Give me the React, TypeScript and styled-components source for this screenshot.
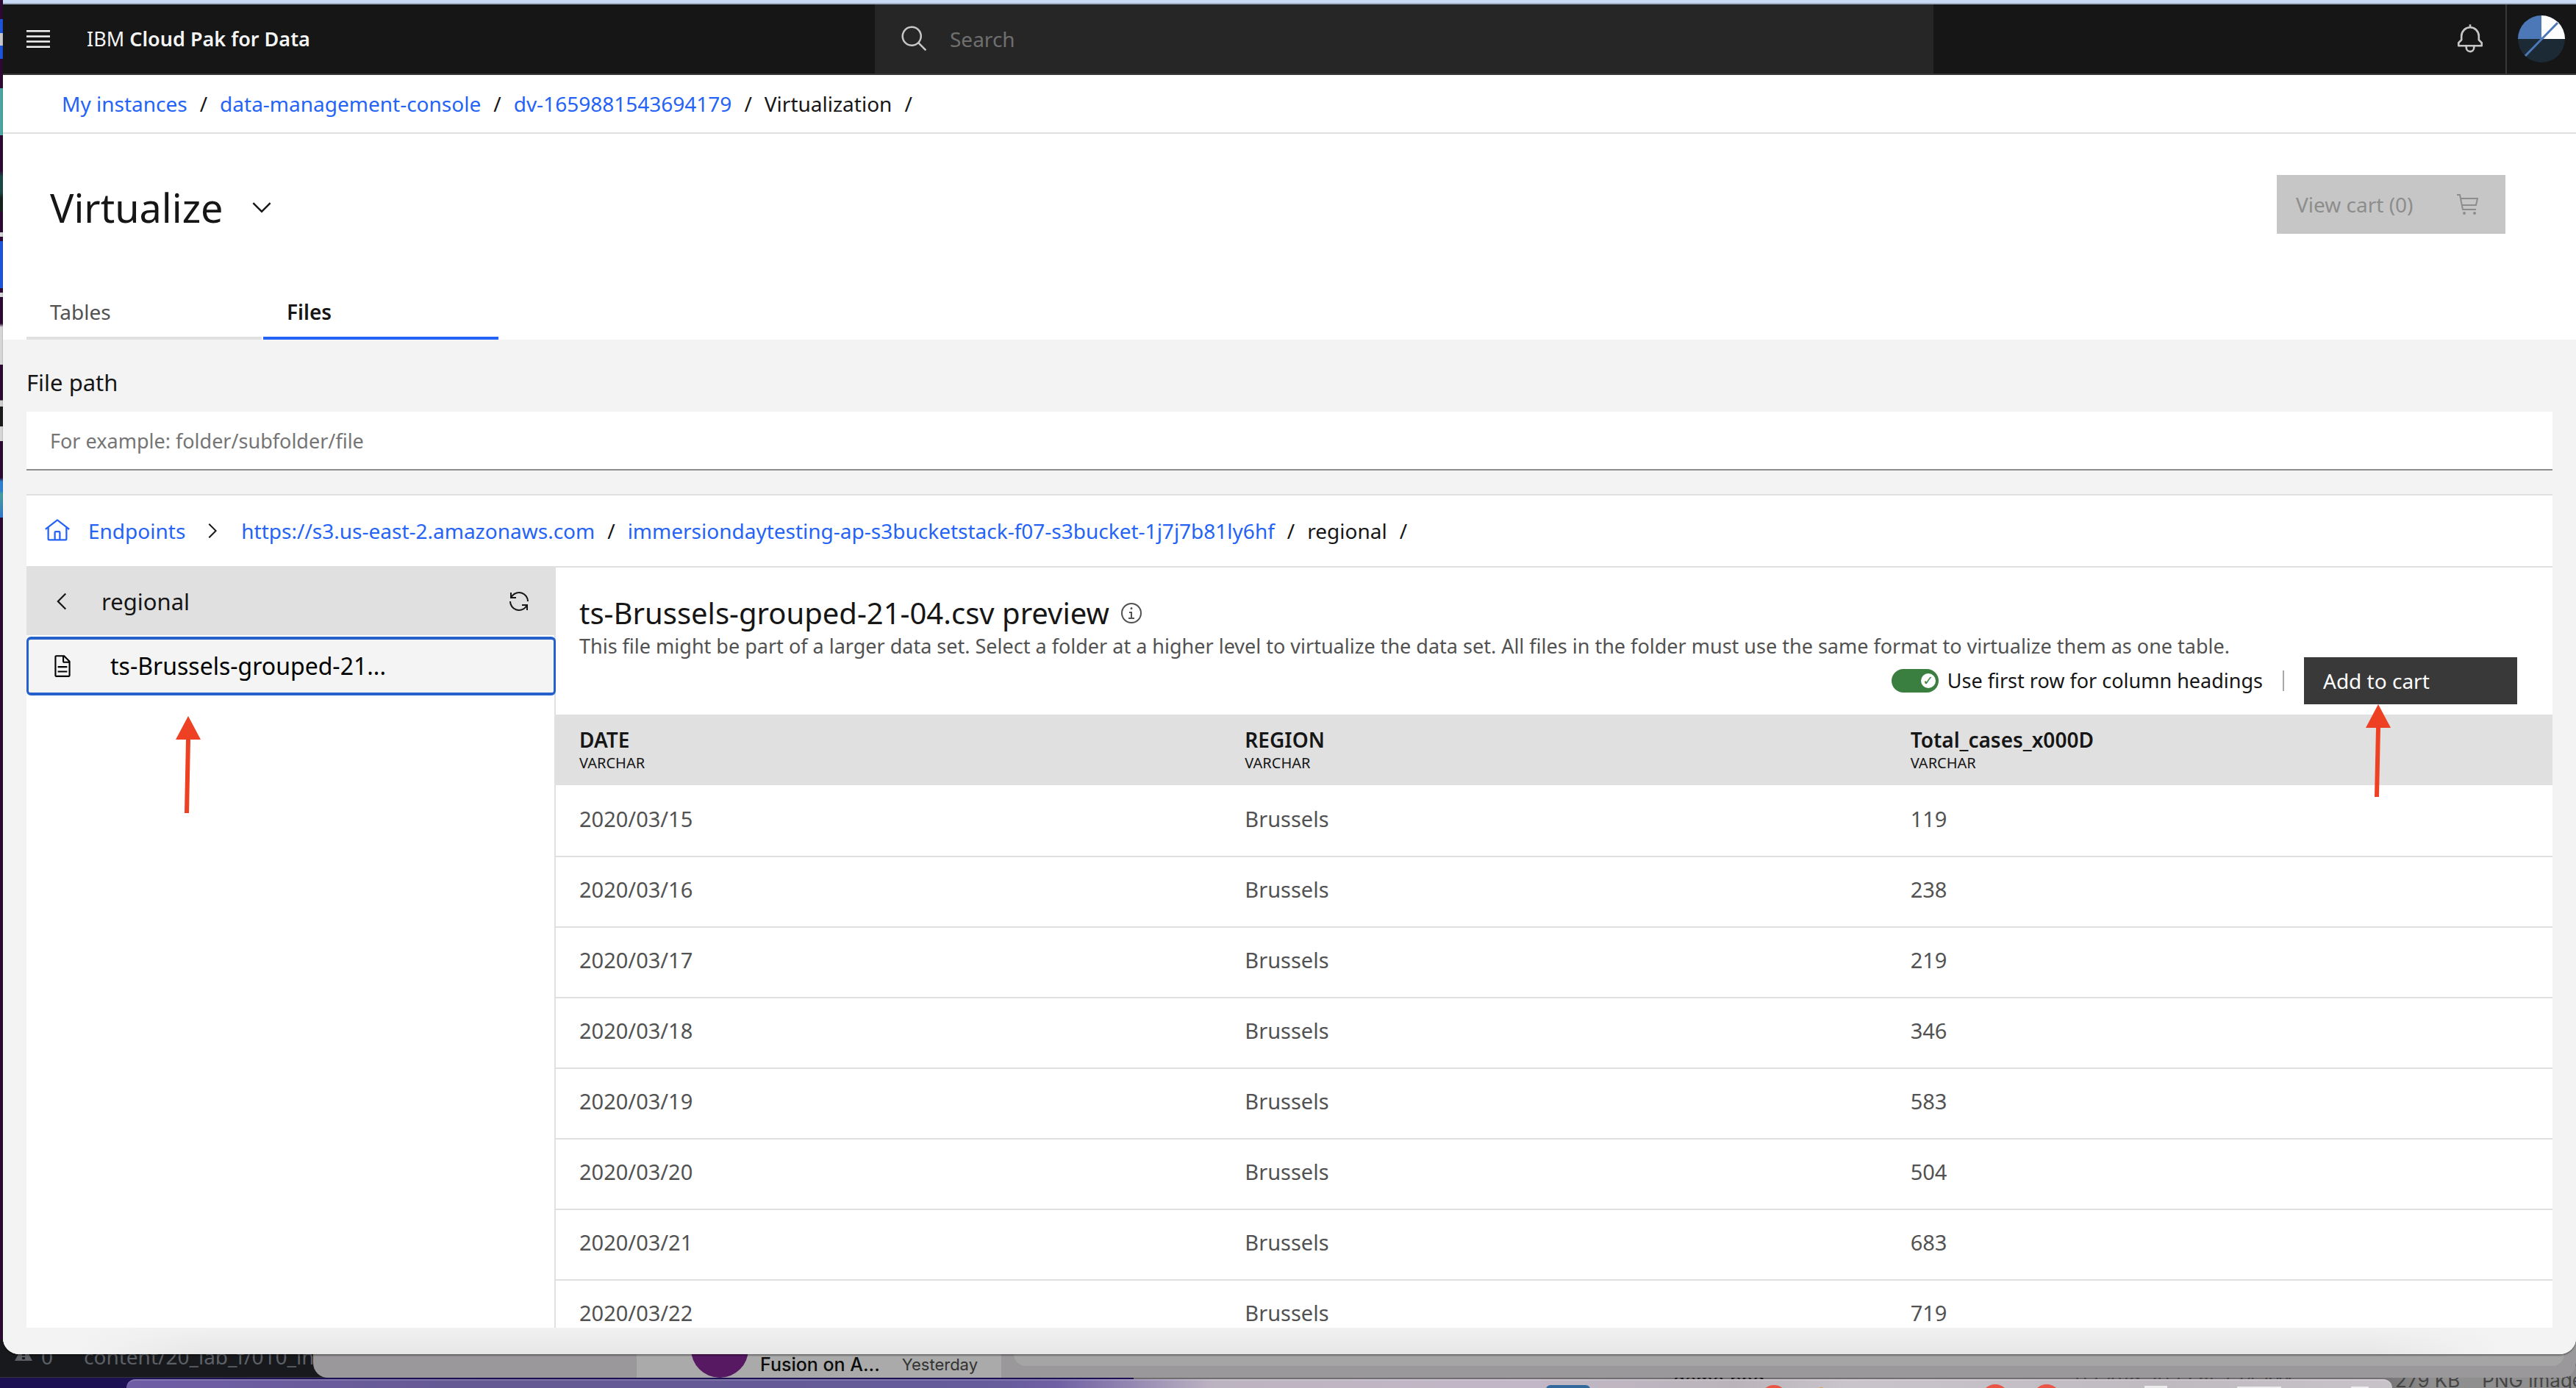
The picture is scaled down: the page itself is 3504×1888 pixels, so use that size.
import React, { useState } from "react";
import styled, { createGlobalStyle, css } from "styled-components";

const sans = `"Noto Sans", "Open Sans", sans-serif`;

const GlobalStyle = createGlobalStyle`
  *, *::before, *::after { box-sizing: border-box; }
  html, body { margin: 0; padding: 0; }
  body { font-family: ${sans}; font-size: 28px; line-height: 36px; color: #161616; background: #1b1153; }
  button, input { font: inherit; }
  a { color: #2563f7; text-decoration: none; }
`;

/* ---------- desktop behind the browser window ---------- */

const Desktop = styled.div`
  position: relative;
  height: 100vh;
  overflow: hidden;
  background: linear-gradient(#2d0a33 0 97%, #1b1153 99%);
`;

const DesktopIcons = styled.div`
  position: absolute;
  left: 0;
  top: 0;
  width: 4px;
  height: 720px;
  background: linear-gradient(
    #2d0a33 0 26px, #1d55d8 26px 45px, #c9c9cc 45px 62px, #1d55d8 62px 80px,
    #2d0a33 80px 120px, #4aa6a0 120px 184px, #2d0a33 184px 232px, #1c4744 240px 262px, #16211d 270px 288px,
    #2d0a33 288px 316px, #d6d6d8 316px 322px, #2d0a33 322px 328px, #1d55d8 328px 392px,
    #2d0a33 392px 398px, #d6d6d8 398px 404px, #2d0a33 404px 440px, #d6d6d8 445px 496px,
    #2d0a33 496px 544px, #cfcfcf 545px 553px, #1b1b1b 553px 580px, #d6d6d8 580px 600px,
    #2d0a33 600px 650px, #2d83cf 655px 668px, #49a09d 672px, #2f77cd 704px, #2d0a33 704px
  );
`;

const BackWindow = styled.div<{ $left: number; $bottom: number; $height: number; $color: string; $width?: string; $radius?: string }>`
  position: absolute;
  left: ${(p) => p.$left}px;
  bottom: ${(p) => p.$bottom}px;
  width: ${(p) => p.$width ?? "auto"};
  right: ${(p) => (p.$width ? "auto" : 0)};
  height: ${(p) => p.$height}px;
  background: ${(p) => p.$color};
  border-radius: ${(p) => p.$radius ?? "0"};
  overflow: hidden;
`;

const StatusBar = styled(BackWindow)`
  display: flex;
  align-items: flex-end;
  gap: 12px;
  padding: 0 20px 12px;
  font-size: 28px;
  line-height: 32px;
  color: #5c6066;
  white-space: nowrap;
  border-bottom: 1px solid #34343a;
  svg { flex: none; margin-bottom: 10px; }
`;

const StatusCount = styled.span`
  margin-right: 30px;
`;

const MailList = styled(BackWindow)`
  display: flex;
  align-items: flex-end;
  padding: 0 32px 0 74px;
`;

const Contact = styled.span`
  width: 78px;
  height: 78px;
  border-radius: 50%;
  background: #561962;
  color: #b0b0b0;
  text-align: center;
  line-height: 62px;
`;

const MailTitle = styled.span`
  margin-left: 16px;
  font: 25px/36px "Inter", sans-serif;
  font-weight: 500;
  color: #0c0c0c;
`;

const MailDate = styled.span`
  margin-left: auto;
  font: 22px/36px "Inter", sans-serif;
  color: #333333;
`;

const FinderRow = styled(BackWindow)`
  display: flex;
  align-items: flex-start;
  gap: 30px;
  padding: 4px 0 0 734px;
  font: 26px/32px "Inter", sans-serif;
  color: #454545;
  white-space: nowrap;
`;

const FinderName = styled.span`
  margin-right: auto;
  color: #151515;
`;

const FinderDate = styled.span`
  margin-right: 110px;
`;

const FinderKind = styled.span`
  margin-right: -10px;
`;

const Dock = styled.div`
  position: absolute;
  left: 172px;
  right: 250px;
  bottom: 0;
  height: 12px;
  overflow: hidden;
  border-top: 2px solid rgba(255, 255, 255, 0.16);
  border-radius: 20px 20px 0 0;
  background: linear-gradient(90deg, #6f5da6 0, #655a93 16%, #665b9b 38%, #6f60a3 41%, #bdb4c2 48%, #c1b7c6 62%, #bab4ba 71%, #c9c4cb 76%, #bfb9c0 90%, #c8c3c9 100%);
`;

const DockIcons = styled.svg`
  display: block;
  margin-left: auto;
`;

/* ---------- browser window ---------- */

const Window = styled.div`
  position: relative;
  display: flex;
  flex-direction: column;
  height: calc(100vh - 46px);
  margin-left: 4px;
  overflow: hidden;
  background: #f3f3f3;
  border-top: 4px solid #cadbf6;
  border-radius: 0 0 22px 22px;
  box-shadow: 0 2px 2px rgba(0, 0, 0, 0.35);
`;

const Header = styled.header`
  flex: none;
  display: grid;
  grid-template-columns: 1186px minmax(0, 1440px) 1fr;
  height: 98px;
  background: #161616;
  border-top: 2px solid #a3afc4;
  border-bottom: 2px solid #393939;
`;

const HeaderStart = styled.div`
  display: flex;
  align-items: center;
  gap: 50px;
  padding-left: 32px;
  color: #f4f4f4;
`;

const IconButton = styled.button`
  display: flex;
  align-items: center;
  justify-content: center;
  padding: 0;
  border: 0;
  background: none;
  color: inherit;
`;

const Product = styled.span`
  font-size: 27px;
  strong { font-weight: 600; }
`;

const SearchBox = styled.label`
  display: flex;
  align-items: center;
  gap: 28px;
  padding-left: 34px;
  background: #262626;
  color: #c6c6c6;
`;

const SearchInput = styled.input`
  flex: 1;
  padding: 0;
  border: 0;
  outline: 0;
  background: none;
  color: #f4f4f4;
  &::placeholder { color: #6f6f6f; opacity: 1; }
`;

const HeaderEnd = styled.div`
  display: flex;
  justify-content: flex-end;
  color: #c6c6c6;
`;

const HeaderAction = styled(IconButton)<{ $divided?: boolean }>`
  width: 96px;
  ${(p) => p.$divided && css`border-left: 2px solid #393939;`}
`;

const Crumbs = styled.nav<{ $inner?: boolean }>`
  flex: none;
  display: flex;
  align-items: center;
  gap: 17px;
  height: ${(p) => (p.$inner ? 100 : 80)}px;
  padding-left: ${(p) => (p.$inner ? 24 : 80)}px;
  background: #ffffff;
  border-bottom: 2px solid #e0e0e0;
  ${(p) => p.$inner && css`border-top: 2px solid #e0e0e0;`}
`;

const Home = styled.a`
  display: flex;
  align-items: center;
  gap: 24px;
`;

const CrumbChevron = styled.span`
  display: flex;
  padding: 0 6px 0 4px;
`;

const PageHead = styled.section`
  flex: none;
  display: flex;
  flex-direction: column;
  justify-content: space-between;
  height: 280px;
  background: #ffffff;
`;

const TitleRow = styled.div`
  display: flex;
  justify-content: space-between;
  align-items: flex-start;
  padding: 56px 96px 0 64px;
`;

const TitleGroup = styled.div`
  display: flex;
  align-items: center;
  gap: 32px;
  padding-top: 12px;
`;

const PageTitle = styled.h1`
  margin: 0;
  font-size: 54px;
  line-height: 64px;
  font-weight: 400;
`;

const CartButton = styled.button<{ $tone: "disabled" | "dark" }>`
  position: relative;
  display: flex;
  align-items: center;
  justify-content: space-between;
  border: 0;
  text-align: left;
  ${(p) => p.$tone === "disabled"
    ? css`width: 311px; height: 80px; padding: 0 34px 0 26px; background: #c6c6c6; color: #8d8d8d;`
    : css`width: 290px; height: 64px; padding: 0 26px; background: #393939; color: #ffffff;`}
`;

const Tabs = styled.div`
  display: flex;
  gap: 2px;
  padding-left: 32px;
`;

const Tab = styled.button<{ $active?: boolean }>`
  width: 320px;
  height: 80px;
  padding: 8px 32px 0;
  border: 0;
  border-bottom: 4px solid ${(p) => (p.$active ? "#2563f7" : "#e0e0e0")};
  background: none;
  color: ${(p) => (p.$active ? "#161616" : "#525252")};
  font-weight: ${(p) => (p.$active ? 600 : 400)};
  text-align: left;
`;

const Body = styled.main`
  flex: 1;
  min-height: 0;
  display: flex;
  flex-direction: column;
  padding: 0 32px;
`;

const FieldLabel = styled.label`
  padding: 38px 0 20px;
  font-size: 31px;
  line-height: 40px;
`;

const PathInput = styled.input`
  flex: none;
  width: 100%;
  height: 80px;
  margin-bottom: 32px;
  padding: 0 32px;
  border: 0;
  border-bottom: 2px solid #8d8d8d;
  border-radius: 0;
  background: #ffffff;
  font-size: 27px;
  &::placeholder { color: #757575; opacity: 1; }
`;

const Split = styled.div`
  flex: 1;
  min-height: 0;
  display: grid;
  grid-template-columns: 720px minmax(0, 1fr);
  background: #ffffff;
  overflow: hidden;
`;

const FolderPanel = styled.aside`
  border-right: 2px solid #e0e0e0;
`;

const FolderHead = styled.div`
  display: flex;
  align-items: center;
  height: 92px;
  margin-right: -2px;
  padding: 0 34px 0 30px;
  background: #e0e0e0;
  font-size: 31px;
`;

const FolderName = styled.span`
  flex: 1;
  margin-left: 36px;
`;

const FileItem = styled.button`
  position: relative;
  display: flex;
  align-items: center;
  gap: 48px;
  width: 720px;
  height: 80px;
  margin-top: 2px;
  padding: 0 29px;
  border: solid #2461cb;
  border-width: 4px 3px;
  border-radius: 6px;
  background: #f4f4f4;
  font-size: 32px;
  text-align: left;
`;

const ArrowMark = styled.svg<{ $left: number; $top: number }>`
  position: absolute;
  left: ${(p) => p.$left}px;
  top: ${(p) => p.$top}px;
  z-index: 1;
  pointer-events: none;
`;

const Preview = styled.section`
  min-width: 0;
`;

const PreviewHead = styled.div`
  padding: 36px 0 0 32px;
`;

const PreviewTitle = styled.h2`
  display: flex;
  align-items: center;
  gap: 14px;
  margin: 0;
  font-size: 40px;
  line-height: 52px;
  font-weight: 400;
  svg { color: #525252; }
`;

const Hint = styled.p`
  margin: 0;
  padding-top: 2px;
  font-size: 27px;
  line-height: 34px;
  color: #525252;
`;

const Toolbar = styled.div`
  display: flex;
  align-items: center;
  justify-content: flex-end;
  height: 64px;
  margin: -2px 48px 14px 0;
`;

const Switch = styled.label`
  display: flex;
  align-items: center;
  gap: 12px;
  font-size: 27px;
`;

const SwitchInput = styled.input`
  appearance: none;
  display: grid;
  align-items: center;
  width: 64px;
  height: 32px;
  margin: 0;
  border-radius: 16px;
  background: ${(p) => (p.checked ? "#3b7f40" : "#8d8d8d")};
  &::before {
    content: "✓";
    width: 20px;
    height: 20px;
    margin-left: ${(p) => (p.checked ? "40px" : "4px")};
    border-radius: 50%;
    background: #ffffff;
    color: #3b7f40;
    font: bold 18px/20px "DejaVu Sans", sans-serif;
    text-align: center;
  }
`;

const Divider = styled.span`
  width: 2px;
  height: 28px;
  margin: 0 27px;
  background: #a8a8a8;
`;

const Table = styled.table`
  width: 100%;
  table-layout: fixed;
  border-collapse: separate;
  border-spacing: 0;
`;

const HeadCell = styled.th`
  height: 96px;
  padding: 0 0 2px 32px;
  background: #e0e0e0;
  text-align: left;
  font-weight: 600;
`;

const ColumnType = styled.small`
  display: block;
  margin-top: 2px;
  font-size: 20px;
  line-height: 24px;
  font-weight: 400;
`;

const Cell = styled.td`
  height: 96px;
  padding: 0 0 6px 32px;
  border-top: 2px solid #e0e0e0;
  font-size: 29px;
  color: #525252;
  tr:first-child > & { border-top-color: #ffffff; }
`;

const WindowFoot = styled.div`
  flex: none;
  height: 36px;
  background:
    linear-gradient(90deg, #f3f3f3 100px, rgba(243, 243, 243, 0) 280px calc(100% - 280px), #f3f3f3 calc(100% - 100px)),
    linear-gradient(#f1f1f1, #e6e6e6);
`;

/* ---------- icons ---------- */

const Icon = ({ d, size = 32 }: { d: string; size?: number }) => (
  <svg width={size} height={size} viewBox="0 0 32 32" fill="currentColor" aria-hidden="true">
    <path d={d} />
  </svg>
);

const icons = {
  search: "M29,27.5859l-7.5521-7.5521a11.0177,11.0177,0,1,0-1.4141,1.4141L27.5859,29ZM4,13a9,9,0,1,1,9,9A9.01,9.01,0,0,1,4,13Z",
  bell: "M28.7071,19.293,26,16.5859V13a10.0136,10.0136,0,0,0-9-9.9492V1H15V3.0508A10.0136,10.0136,0,0,0,6,13v3.5859L3.2929,19.293A1,1,0,0,0,3,20v3a1,1,0,0,0,1,1h7v.7768a5.152,5.152,0,0,0,4.5,5.1987A5.0057,5.0057,0,0,0,21,25V24h7a1,1,0,0,0,1-1V20A1,1,0,0,0,28.7071,19.293ZM19,25a3,3,0,0,1-6,0V24h6Zm8-3H5V20.4141L7.707,17.707A1,1,0,0,0,8,17V13a8,8,0,0,1,16,0v4a1,1,0,0,0,.293.707L27,20.4141Z",
  chevronDown: "M16 22L6 12 7.4 10.6 16 19.2 24.6 10.6 26 12z",
  chevronRight: "M22 16L12 26 10.6 24.6 19.2 16 10.6 7.4 12 6z",
  chevronLeft: "M10 16L20 6 21.4 7.4 12.8 16 21.4 24.6 20 26z",
  home: "M16.6123,2.2138a1.01,1.01,0,0,0-1.2427,0L1,13.4194l1.2427,1.5717L4,13.6208V26a2.0041,2.0041,0,0,0,2,2H26a2.0037,2.0037,0,0,0,2-2V13.63L29.7573,15,31,13.4282ZM18,26H14V18h4Zm2,0V18a2.0023,2.0023,0,0,0-2-2H14a2.002,2.002,0,0,0-2,2v8H6V12.0615l10-7.79,10,7.8005V26Z",
  renew: "M12 10H6.78A11 11 0 0127 16h2A13 13 0 006 7.68V4H4v8h8zM20 22h5.22A11 11 0 015 16H3a13 13 0 0023 8.32V28h2V20H20z",
  document: "M25.7,9.3l-7-7C18.5,2.1,18.3,2,18,2H8C6.9,2,6,2.9,6,4v24c0,1.1,0.9,2,2,2h16c1.1,0,2-0.9,2-2V10C26,9.7,25.9,9.5,25.7,9.3z M18,4.4l5.6,5.6H18V4.4z M24,28H8V4h8v6c0,1.1,0.9,2,2,2h6V28z M10 22H22V24H10z M10 16H22V18H10z",
  info: "M17 22V14H13v2h2v6H12v2h8V22zM16 8a1.5 1.5 0 101.5 1.5A1.5 1.5 0 0016 8zM16 30A14 14 0 1130 16 14 14 0 0116 30zM16 4A12 12 0 1028 16 12 12 0 0016 4z",
  cart: "M10 26a2 2 0 100 4 2 2 0 000-4zM24 26a2 2 0 100 4 2 2 0 000-4zM28 7H5.82L5 2.8A1 1 0 004 2H0V4H3.18L7 23.2A1 1 0 008 24H26V22H8.82L8 18H26a1 1 0 001-.78l2-9A1 1 0 0028 7zM25.2 16H7.62L6.22 9H26.75z",
};

const MenuIcon = () => (
  <svg width="32" height="24" viewBox="0 0 32 24" fill="currentColor" aria-hidden="true">
    <path d="M0 0h32v2.5H0zM0 7.2h32v2.5H0zM0 14.3h32v2.5H0zM0 21.5h32V24H0z" />
  </svg>
);

const Avatar = () => (
  <svg width="64" height="64" viewBox="0 0 64 64" aria-hidden="true">
    <circle cx="32" cy="32" r="32" fill="#1c2a36" />
    <path d="M0 32A32 32 0 0 1 32 0V32Z" fill="#4c78b8" />
    <path d="M32 0A32 32 0 0 1 64 32H32Z" fill="#fdfdfd" />
    <path d="M10 55L54 10" stroke="#4c78b8" strokeWidth="3" />
  </svg>
);

const RedArrow = ({ left, top, length }: { left: number; top: number; length: number }) => (
  <ArrowMark $left={left} $top={top} width="34" height={length} viewBox={`0 0 34 ${length}`} aria-hidden="true">
    <path d={`M17 0L34 32H20L18 ${length}H12L14 32H0Z`} fill="#ee4023" />
  </ArrowMark>
);

/* ---------- data ---------- */

const columns = ["DATE", "REGION", "Total_cases_x000D"];

const rows = [
  ["2020/03/15", "Brussels", "119"],
  ["2020/03/16", "Brussels", "238"],
  ["2020/03/17", "Brussels", "219"],
  ["2020/03/18", "Brussels", "346"],
  ["2020/03/19", "Brussels", "583"],
  ["2020/03/20", "Brussels", "504"],
  ["2020/03/21", "Brussels", "683"],
  ["2020/03/22", "Brussels", "719"],
];

export default function App() {
  const [tab, setTab] = useState("Files");
  const [headings, setHeadings] = useState(true);

  return (
    <Desktop>
      <GlobalStyle />
      <DesktopIcons />
      <FinderRow $left={1542} $bottom={0} $height={30} $color="linear-gradient(90deg, #6f6d6f 86%, #8f8f8f 90%)">
        <FinderName>demo.png</FinderName>
        <FinderDate>02 Aug 2022 at 7:14 AM</FinderDate>
        <span>279 KB</span>
        <FinderKind>PNG image</FinderKind>
      </FinderRow>
      <StatusBar $left={0} $bottom={14} $height={52} $width="470px" $color="#17191c">
        <svg width="24" height="22" viewBox="0 0 24 22" fill="currentColor" aria-hidden="true">
          <path fillRule="evenodd" d="M12 0L24 22H0ZM10 8v7h4V8Zm0 9v3h4v-3Z" />
        </svg>
        <StatusCount>0</StatusCount>
        <span>content/20_lab_f/010_introd</span>
      </StatusBar>
      <BackWindow $left={426} $bottom={14} $height={60} $color="#9a989a" $radius="0 0 20px 20px">
        <MailList $left={440} $bottom={0} $height={60} $width="496px" $color="#a9aaa9">
          <Contact>AL</Contact>
          <MailTitle>Fusion on A...</MailTitle>
          <MailDate>Yesterday</MailDate>
        </MailList>
        <BackWindow $left={953} $bottom={16} $height={60} $width="calc(100% - 969px)" $color="#a4a5a4" $radius="0 0 16px 16px" />
      </BackWindow>
      <Dock>
        <DockIcons width="1180" height="10" viewBox="2074 0 1180 10" aria-hidden="true">
          <rect x="2103" y="6" width="60" height="20" rx="6" fill="#33689c" />
          <circle cx="2413" cy="24" r="18" fill="#ea5545" />
          <circle cx="2477" cy="14" r="5" fill="#e0a050" />
          <circle cx="2714" cy="24" r="19" fill="#ea5545" />
          <circle cx="2784" cy="24" r="19" fill="#ea5545" />
          <path d="M2917 7h31v6h-31zM3043 8h60v4h-60zM3198 8h24v4h-24z" fill="#ececec" />
        </DockIcons>
      </Dock>

      <Window>
        <Header>
          <HeaderStart>
            <IconButton aria-label="Menu"><MenuIcon /></IconButton>
            <Product>IBM <strong>Cloud Pak for Data</strong></Product>
          </HeaderStart>
          <SearchBox>
            <Icon d={icons.search} size={40} />
            <SearchInput type="search" placeholder="Search" aria-label="Search" />
          </SearchBox>
          <HeaderEnd>
            <HeaderAction aria-label="Notifications"><Icon d={icons.bell} size={42} /></HeaderAction>
            <HeaderAction $divided aria-label="Profile"><Avatar /></HeaderAction>
          </HeaderEnd>
        </Header>

        <Crumbs aria-label="Location">
          <a href="#instances">My instances</a>
          <span>/</span>
          <a href="#console">data-management-console</a>
          <span>/</span>
          <a href="#dv">dv-1659881543694179</a>
          <span>/</span>
          <span>Virtualization</span>
          <span>/</span>
        </Crumbs>

        <PageHead>
          <TitleRow>
            <TitleGroup>
              <PageTitle>Virtualize</PageTitle>
              <IconButton aria-label="Switch page"><Icon d={icons.chevronDown} size={40} /></IconButton>
            </TitleGroup>
            <CartButton $tone="disabled" disabled>
              View cart (0)
              <Icon d={icons.cart} />
            </CartButton>
          </TitleRow>
          <Tabs role="tablist">
            {["Tables", "Files"].map((name) => (
              <Tab key={name} role="tab" aria-selected={tab === name} $active={tab === name} onClick={() => setTab(name)}>
                {name}
              </Tab>
            ))}
          </Tabs>
        </PageHead>

        <Body>
          <FieldLabel htmlFor="path">File path</FieldLabel>
          <PathInput id="path" type="text" placeholder="For example: folder/subfolder/file" />

          <Crumbs $inner aria-label="Folder">
            <Home href="#endpoints"><Icon d={icons.home} size={36} />Endpoints</Home>
            <CrumbChevron><Icon d={icons.chevronRight} /></CrumbChevron>
            <a href="#s3">https://s3.us-east-2.amazonaws.com</a>
            <span>/</span>
            <a href="#bucket">immersiondaytesting-ap-s3bucketstack-f07-s3bucket-1j7j7b81ly6hf</a>
            <span>/</span>
            <span>regional</span>
            <span>/</span>
          </Crumbs>

          <Split>
            <FolderPanel>
              <FolderHead>
                <IconButton aria-label="Back"><Icon d={icons.chevronLeft} size={36} /></IconButton>
                <FolderName>regional</FolderName>
                <IconButton aria-label="Refresh"><Icon d={icons.renew} /></IconButton>
              </FolderHead>
              <FileItem>
                <Icon d={icons.document} size={34} />
                ts-Brussels-grouped-21...
                <RedArrow left={200} top={104} length={132} />
              </FileItem>
            </FolderPanel>

            <Preview>
              <PreviewHead>
                <PreviewTitle>ts-Brussels-grouped-21-04.csv preview <Icon d={icons.info} /></PreviewTitle>
                <Hint>
                  This file might be part of a larger data set. Select a folder at a higher level to virtualize the data
                  set. All files in the folder must use the same format to virtualize them as one table.
                </Hint>
              </PreviewHead>
              <Toolbar>
                <Switch>
                  <SwitchInput
                    type="checkbox"
                    role="switch"
                    checked={headings}
                    onChange={(e) => setHeadings(e.target.checked)}
                  />
                  Use first row for column headings
                </Switch>
                <Divider />
                <CartButton $tone="dark">
                  Add to cart
                  <RedArrow left={84} top={64} length={126} />
                </CartButton>
              </Toolbar>
              <Table>
                <thead>
                  <tr>
                    {columns.map((name) => (
                      <HeadCell key={name} scope="col">
                        {name}
                        <ColumnType>VARCHAR</ColumnType>
                      </HeadCell>
                    ))}
                  </tr>
                </thead>
                <tbody>
                  {rows.map((row) => (
                    <tr key={row[0]}>
                      {row.map((value) => <Cell key={value}>{value}</Cell>)}
                    </tr>
                  ))}
                </tbody>
              </Table>
            </Preview>
          </Split>
        </Body>
        <WindowFoot />
      </Window>
    </Desktop>
  );
}
